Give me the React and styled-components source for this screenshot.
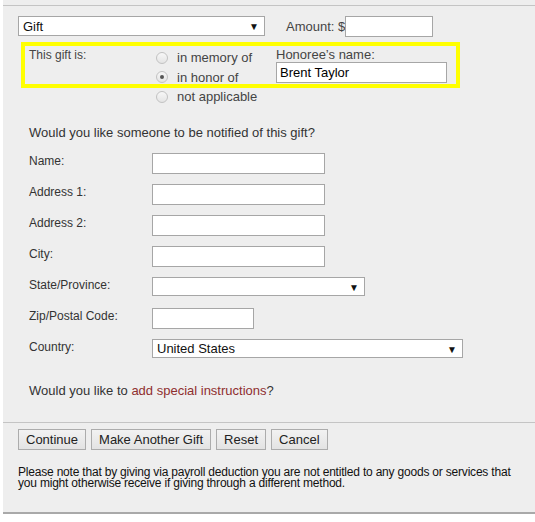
import React from 'react';
import styled, { createGlobalStyle } from 'styled-components';

const GlobalStyle = createGlobalStyle`
  body {
    margin: 0;
    background: #fff;
    font-family: "Liberation Sans", Arial, sans-serif;
  }
`;

const Page = styled.div`
  margin-left: 3px;
  height: 514px;
  box-sizing: border-box;
  padding-top: 5px;
  background: #eeeeee;
  border-bottom: 2px solid #a9a9a9;
`;

const Form = styled.div`
  border-top: 1px solid #c4c4c4;
  padding: 10px 0 0 15px;
`;

const TopRow = styled.div`
  display: flex;
  align-items: flex-start;
  height: 21px;
`;

const SelectWrap = styled.div`
  position: relative;
  width: ${p => p.width}px;
  height: ${p => p.height || 20}px;
  &::after {
    content: "▼";
    position: absolute;
    right: 6px;
    top: 50%;
    transform: translateY(-50%);
    font-size: 10px;
    color: #111;
    pointer-events: none;
  }
`;

const Select = styled.select`
  appearance: none;
  width: 100%;
  height: 100%;
  box-sizing: border-box;
  border: 1px solid #a6a6a6;
  background: #fff;
  border-radius: 0;
  padding: 0 0 0 4px;
  font-family: "Liberation Sans", Arial, sans-serif;
  font-size: 13px;
  color: #111;
  outline: none;
`;

const Text = styled.span`
  font-size: 13px;
  line-height: 21px;
  color: #444;
  margin-left: ${p => p.offset || 0}px;
`;

const Input = styled.input`
  width: ${p => p.width}px;
  height: 21px;
  box-sizing: border-box;
  border: 1px solid #a6a6a6;
  background: #fff;
  margin: 0;
  padding: 0 3px;
  font-family: "Liberation Sans", Arial, sans-serif;
  font-size: 13px;
  color: #000;
  outline: none;
`;

const GiftBox = styled.div`
  display: flex;
  align-items: flex-start;
  margin: 5px 0 0 3px;
  width: 439px;
  height: 46px;
  box-sizing: border-box;
  border: 4px solid #ffff00;
  padding: 2px 0 0 4px;
`;

const GiftLabel = styled.div`
  width: 127px;
  font-size: 12px;
  line-height: 14px;
  color: #444;
`;

const RadioGroup = styled.div`
  width: 120px;
  display: flex;
  flex-direction: column;
`;

const RadioRow = styled.label`
  display: flex;
  align-items: center;
  flex-shrink: 0;
  height: 19.5px;
  font-size: 13px;
  color: #444;
  white-space: nowrap;
`;

const Radio = styled.input.attrs({ type: 'radio' })`
  appearance: none;
  width: 12px;
  height: 12px;
  margin: 0 9px 0 0;
  border-radius: 50%;
  border: 1px solid #c2c2c2;
  background: linear-gradient(#f7f7f7, #e4e4e4);
  box-sizing: border-box;
  display: grid;
  place-items: center;
  &:checked::after {
    content: "";
    width: 4px;
    height: 4px;
    border-radius: 50%;
    background: #555;
  }
`;

const Honoree = styled.div`
  display: flex;
  flex-direction: column;
`;

const HonoreeLabel = styled.div`
  font-size: 13px;
  line-height: 14px;
  color: #444;
`;

const Notify = styled.div`
  margin-top: 37px;
  padding-left: 11px;
`;

const Question = styled.div`
  font-size: 13px;
  line-height: 15px;
  color: #333;
  margin-bottom: ${p => p.gap || 0}px;
  a {
    color: #8e2f2f;
    text-decoration: none;
  }
`;

const FieldRow = styled.div`
  display: flex;
  align-items: flex-start;
  height: 31px;
`;

const FieldLabel = styled.div`
  width: 123px;
  padding-top: 1px;
  font-size: 12px;
  line-height: 14px;
  color: #333;
`;

const Special = styled(Question)`
  margin-top: 13px;
`;

const Footer = styled.div`
  margin-top: 24px;
  border-top: 1px solid #c4c4c4;
  padding: 6px 0 0 15px;
`;

const Buttons = styled.div`
  display: flex;
  gap: 5px;
`;

const Button = styled.button`
  height: 21px;
  padding: 0 7px;
  border: 1px solid #acacac;
  border-radius: 0;
  background: linear-gradient(#f2f2f2, #e3e3e3);
  font-family: "Liberation Sans", Arial, sans-serif;
  font-size: 13px;
  color: #222;
`;

const Note = styled.p`
  margin: 17px 0 0;
  font-size: 12px;
  line-height: 11px;
  letter-spacing: -0.2px;
  color: #111;
  width: 500px;
`;

const fields = [
  { label: 'Name:', kind: 'input', width: 173 },
  { label: 'Address 1:', kind: 'input', width: 173 },
  { label: 'Address 2:', kind: 'input', width: 173 },
  { label: 'City:', kind: 'input', width: 173 },
  { label: 'State/Province:', kind: 'select', width: 213, options: [''] },
  { label: 'Zip/Postal Code:', kind: 'input', width: 102 },
  { label: 'Country:', kind: 'select', width: 311, options: ['United States'] }
];

export default function App() {
  return (
    <>
      <GlobalStyle />
      <Page>
        <Form>
          <TopRow>
            <SelectWrap width={247}>
              <Select defaultValue="Gift">
                <option>Gift</option>
              </Select>
            </SelectWrap>
            <Text offset={21}>Amount: $</Text>
            <Input width={88} />
          </TopRow>

          <GiftBox>
            <GiftLabel>This gift is:</GiftLabel>
            <RadioGroup>
              <RadioRow><Radio name="type" />in memory of</RadioRow>
              <RadioRow><Radio name="type" defaultChecked />in honor of</RadioRow>
              <RadioRow><Radio name="type" />not applicable</RadioRow>
            </RadioGroup>
            <Honoree>
              <HonoreeLabel>Honoree’s name:</HonoreeLabel>
              <Input width={171} defaultValue="Brent Taylor" />
            </Honoree>
          </GiftBox>

          <Notify>
            <Question gap={13}>Would you like someone to be notified of this gift?</Question>
            {fields.map(f => (
              <FieldRow key={f.label}>
                <FieldLabel>{f.label}</FieldLabel>
                {f.kind === 'input' ? (
                  <Input width={f.width} />
                ) : (
                  <SelectWrap width={f.width} height={19}>
                    <Select defaultValue={f.options[0]}>
                      {f.options.map(o => <option key={o}>{o}</option>)}
                    </Select>
                  </SelectWrap>
                )}
              </FieldRow>
            ))}
            <Special>
              Would you like to <a href="#">add special instructions</a>?
            </Special>
          </Notify>
        </Form>

        <Footer>
          <Buttons>
            <Button>Continue</Button>
            <Button>Make Another Gift</Button>
            <Button>Reset</Button>
            <Button>Cancel</Button>
          </Buttons>
          <Note>
            Please note that by giving via payroll deduction you are not entitled to any goods or services that
            you might otherwise receive if giving through a different method.
          </Note>
        </Footer>
      </Page>
    </>
  );
}
